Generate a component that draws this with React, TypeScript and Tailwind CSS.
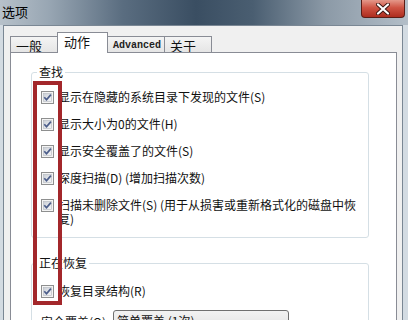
import React from "react";

const CJK = "font-['Microsoft_YaHei','Noto_Sans_CJK_SC',sans-serif]";

type Row = { label: React.ReactNode };

const findRows: Row[] = [
  { label: "显示在隐藏的系统目录下发现的文件(S)" },
  { label: "显示大小为0的文件(H)" },
  { label: "显示安全覆盖了的文件(S)" },
  { label: "深度扫描(D) (增加扫描次数)" },
  {
    label: (
      <>
        扫描未删除文件(S) (用于从损害或重新格式化的磁盘中恢
        <br />
        复)
      </>
    ),
  },
];

function CheckBox() {
  return (
    <svg width="13" height="13" viewBox="0 0 13 13" className="mt-[1px] shrink-0">
      <defs>
        <linearGradient id="cbg" x1="0" y1="0" x2="1" y2="1">
          <stop offset="0" stopColor="#c9ced6" />
          <stop offset="1" stopColor="#f8f8f8" />
        </linearGradient>
      </defs>
      <rect x="0.5" y="0.5" width="12" height="12" fill="#f4f4f4" stroke="#8e8f8f" />
      <rect x="2.5" y="2.5" width="8" height="8" fill="url(#cbg)" stroke="#b3b8be" strokeWidth="0.6" />
      <path d="M3.3 6.3 L5.5 8.8 L9.9 3.6" fill="none" stroke="#4b5d8a" strokeWidth="1.7" />
    </svg>
  );
}

function CheckRow({ label }: Row) {
  return (
    <div className="flex items-start gap-[4px] text-[12px] leading-[14px] text-[#111]">
      <CheckBox />
      <span>{label}</span>
    </div>
  );
}

function Tab({ label, width, selected, mono }: { label: string; width: string; selected?: boolean; mono?: boolean }) {
  return (
    <div
      className={
        selected
          ? `relative z-10 -ml-px flex h-[21px] items-start border border-b-0 border-[#898c95] bg-white pl-[6px] pt-[1px] ${width}`
          : `-ml-px flex h-[17px] items-center border border-b-0 border-[#898c95] bg-[linear-gradient(180deg,#f4f4f4,#e4e4e4)] pl-[5px] pt-[1px] ${width}`
      }
    >
      <span
        className={
          mono
            ? "font-['Liberation_Mono',monospace] text-[10px] font-semibold leading-[14px] text-[#222]"
            : "text-[13px] leading-[15px] text-[#111]"
        }
      >
        {label}
      </span>
    </div>
  );
}

export default function App() {
  return (
    <div className={`relative flex h-[320px] w-[408px] flex-col overflow-hidden bg-[#d3dbe2] ${CJK}`}>
      {/* title bar */}
      <div className="flex h-[25px] shrink-0 items-start justify-between bg-[linear-gradient(90deg,#b7c1ca_0%,#98a6b3_12%,#5a6d80_30%,#3a4e62_48%,#4a5e71_62%,#8c9aa7_80%,#b3bec8_100%)]">
        <span className="pl-[2px] pt-[4px] text-[13px] leading-[16px] text-black">选项</span>
        <div className="mr-[3px] flex h-[18px] w-[44px] items-center justify-center rounded-b-[4px] border border-t-0 border-[#5b1d16] bg-[linear-gradient(180deg,#e4988a_0%,#cf5444_45%,#ad2d1f_100%)]">
          <svg width="14" height="12" viewBox="0 0 14 12">
            <path d="M2 1.5 L12 10.5 M12 1.5 L2 10.5" stroke="#3b1410" strokeWidth="4" strokeLinecap="round" />
            <path d="M2 1.5 L12 10.5 M12 1.5 L2 10.5" stroke="#ffffff" strokeWidth="2.2" strokeLinecap="round" />
          </svg>
        </div>
      </div>

      {/* window body */}
      <div className="ml-[3px] mr-[5px] flex flex-1 flex-col border border-b-0 border-[#7a8794] bg-[#f0f0f0] pl-[6px] pt-[6px]">
        <div className="flex h-[21px] items-end pl-px">
          <Tab label="一般" width="w-[48px]" />
          <Tab label="动作" width="w-[51px]" selected />
          <Tab label="Advanced" width="w-[58px]" mono />
          <Tab label="关于" width="w-[48px]" />
        </div>

        <div className="-mt-px mr-[5px] flex flex-1 flex-col border border-b-0 border-[#898c95] bg-white pl-[20px] pr-[27px] pt-[11px]">
          <fieldset className="rounded-[3px] border border-[#d5dfe5]">
            <legend className="ml-[5px] px-[2px] text-[12px] leading-[16px] text-[#111]">查找</legend>
            <div className="flex flex-col gap-[13px] pb-[11px] pl-[9px] pt-[10px]">
              {findRows.map((r, i) => (
                <CheckRow key={i} label={r.label} />
              ))}
            </div>
          </fieldset>

          <fieldset className="mt-[17px] rounded-[3px] border border-[#d5dfe5]">
            <legend className="ml-[5px] px-[2px] text-[12px] leading-[16px] text-[#111]">正在恢复</legend>
            <div className="flex flex-col gap-[12px] pl-[9px] pt-[13px]">
              <CheckRow label="恢复目录结构(R)" />
              <div className="flex items-start gap-[6px] text-[12px] leading-[14px] text-[#111]">
                <span className="w-[66px] shrink-0 whitespace-nowrap pt-[5px]">安全覆盖(O):</span>
                <div className="flex h-[21px] w-[176px] shrink-0 items-center whitespace-nowrap rounded-[3px] border border-[#707070] bg-[linear-gradient(180deg,#f2f2f2,#e3e3e3)] pl-[3px]">
                  简单覆盖 (1次)
                </div>
              </div>
            </div>
          </fieldset>
        </div>
      </div>

      {/* red annotation box */}
      <div className="pointer-events-none absolute left-[33px] top-[81px] h-[224px] w-[29px] border-[4px] border-[#a3272b]" />
    </div>
  );
}
